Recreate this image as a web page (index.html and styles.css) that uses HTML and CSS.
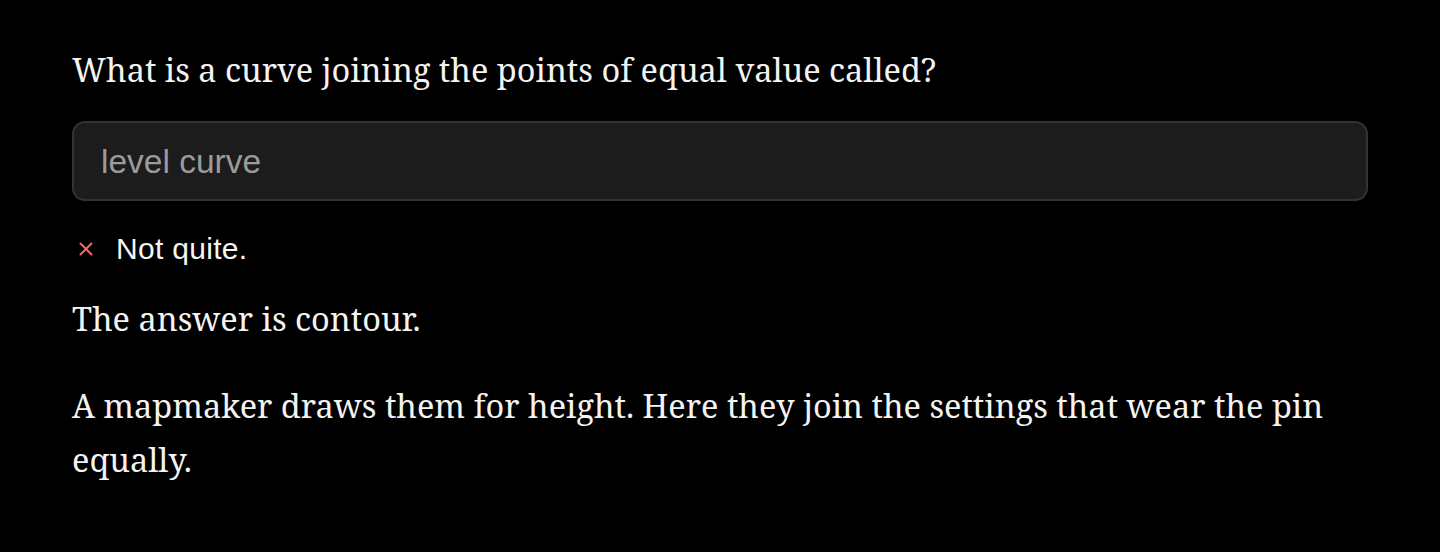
FILE: index.html
```html
<!DOCTYPE html>
<html lang="en">
<head>
<meta charset="utf-8">
<title>Quiz</title>
<link rel="stylesheet" href="styles.css">
</head>
<body>
<main class="card">
  <p class="question">What is a curve joining the points of equal value called?</p>
  <input class="answer" type="text" value="level curve" readonly>
  <div class="feedback">
    <svg class="feedback-icon" width="14" height="14" viewBox="0 0 14 14" aria-hidden="true">
      <path d="M1.5 1.5 L12.5 12.5 M12.5 1.5 L1.5 12.5" stroke="#e56f6a" stroke-width="2" stroke-linecap="round" fill="none"/>
    </svg>
    <span class="feedback-text">Not quite.</span>
  </div>
  <p class="reveal">The answer is contour.</p>
  <p class="explain">A mapmaker draws them for height. Here they join the settings that wear the pin equally.</p>
</main>
</body>
</html>
```
FILE: styles.css
```css
html, body {
  margin: 0;
  padding: 0;
  background: #000;
}
body {
  color: #f3f3f3;
  font-family: "Noto Serif", "Liberation Serif", serif;
  font-size: 32.5px;
  line-height: 53.3px;
}
.card {
  display: flex;
  flex-direction: column;
  padding: 43px 72px 0 72px;
}
.card p {
  margin: 0;
}
.question {
  margin-bottom: 25px !important;
}
.answer {
  box-sizing: border-box;
  width: 100%;
  height: 80px;
  margin: 0;
  padding: 2px 26px 0 27px;
  background: #1c1c1c;
  border: 2px solid #333333;
  border-radius: 13px;
  color: #9b9b9b;
  font-family: "Liberation Sans", Arial, sans-serif;
  font-size: 33.5px;
  outline: none;
}
.feedback {
  display: flex;
  align-items: center;
  margin-top: 32px;
  padding-left: 7px;
  height: 32px;
}
.feedback-icon {
  flex: none;
  margin-right: 23px;
}
.feedback-text {
  font-family: "Liberation Sans", Arial, sans-serif;
  font-size: 30px;
  line-height: 32px;
  letter-spacing: 0.3px;
  color: #f5f5f5;
}
.reveal {
  margin-top: 27px !important;
}
.explain {
  margin-top: 33.7px !important;
}
```
